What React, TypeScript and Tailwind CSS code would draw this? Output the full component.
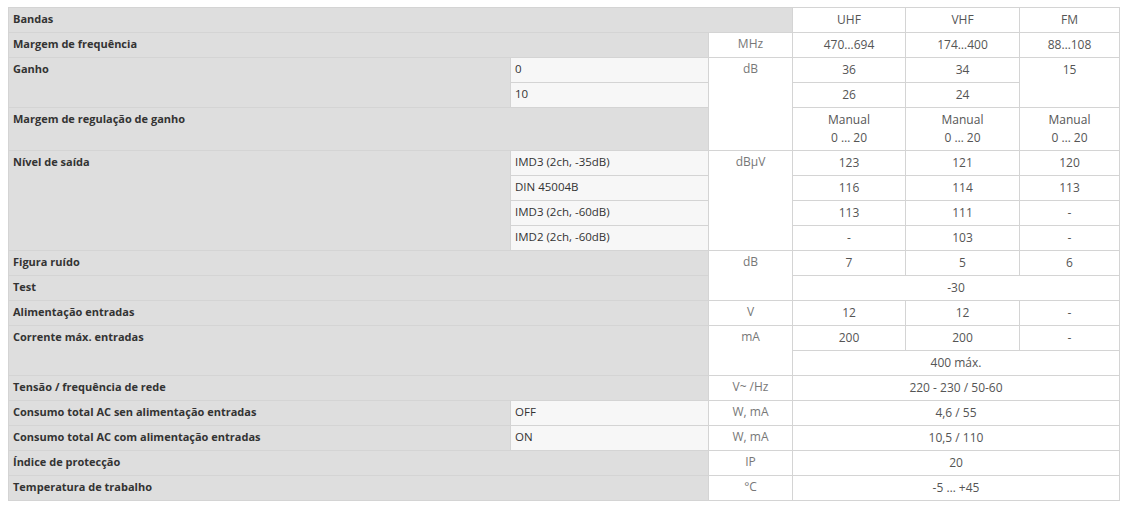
import React from "react";

type Cell = {
  t: React.ReactNode;
  k: "label" | "sub" | "unit" | "val";
  cls?: string;
};

const L = (t: React.ReactNode, cls = ""): Cell => ({ t, k: "label", cls });
const S = (t: React.ReactNode, cls = ""): Cell => ({ t, k: "sub", cls });
const U = (t: React.ReactNode, cls = ""): Cell => ({ t, k: "unit", cls });
const V = (t: React.ReactNode, cls = ""): Cell => ({ t, k: "val", cls });

const manual = (
  <>
    Manual
    <br />0 … 20
  </>
);

const cells: Cell[] = [
  L("Bandas", "col-span-3"),
  V("UHF"),
  V("VHF"),
  V("FM"),
  L("Margem de frequência", "col-span-2"),
  U("MHz"),
  V("470…694"),
  V("174…400"),
  V("88…108"),
  L("Ganho", "row-span-2"),
  S("0"),
  U("dB", "row-span-3"),
  V("36"),
  V("34"),
  V("15", "row-span-2"),
  S("10"),
  V("26"),
  V("24"),
  L("Margem de regulação de ganho", "col-span-2"),
  V(manual),
  V(manual),
  V(manual),
  L("Nível de saída", "row-span-4"),
  S("IMD3 (2ch, -35dB)"),
  U("dBµV", "row-span-4"),
  V("123"),
  V("121"),
  V("120"),
  S("DIN 45004B"),
  V("116"),
  V("114"),
  V("113"),
  S("IMD3 (2ch, -60dB)"),
  V("113"),
  V("111"),
  V("-"),
  S("IMD2 (2ch, -60dB)"),
  V("-"),
  V("103"),
  V("-"),
  L("Figura ruído", "col-span-2"),
  U("dB", "row-span-2"),
  V("7"),
  V("5"),
  V("6"),
  L("Test", "col-span-2"),
  V("-30", "col-span-3"),
  L("Alimentação entradas", "col-span-2"),
  U("V"),
  V("12"),
  V("12"),
  V("-"),
  L("Corrente máx. entradas", "col-span-2 row-span-2"),
  U("mA", "row-span-2"),
  V("200"),
  V("200"),
  V("-"),
  V("400 máx.", "col-span-3"),
  L("Tensão / frequência de rede", "col-span-2"),
  U("V~ /Hz"),
  V("220 - 230 / 50-60", "col-span-3"),
  L("Consumo total AC sen alimentação entradas"),
  S("OFF"),
  U("W, mA"),
  V("4,6 / 55", "col-span-3"),
  L("Consumo total AC com alimentação entradas"),
  S("ON"),
  U("W, mA"),
  V("10,5 / 110", "col-span-3"),
  L("Índice de protecção", "col-span-2"),
  U("IP"),
  V("20", "col-span-3"),
  L("Temperatura de trabalho", "col-span-2"),
  U("°C"),
  V("-5 … +45", "col-span-3"),
];

const base: Record<Cell["k"], string> = {
  label:
    "bg-[#dedede] text-[#333333] font-bold text-[11px] leading-[17px] pl-[4px] pt-[2px]",
  sub: "bg-[#f7f7f7] text-[#333333] text-[11.5px] leading-[17px] pl-[4px] pt-[2px]",
  unit: "bg-white text-[#777777] text-[12px] leading-[18px] text-center pt-[2px]",
  val: "bg-white text-[#555555] text-[12px] leading-[18px] text-center pt-[3px]",
};

export default function App() {
  return (
    <div className="w-[1127px] h-[510px] bg-white font-['Open_Sans',sans-serif] pt-[7px] pl-[8px]">
      <div className="grid w-max grid-cols-[501px_197px_83px_112px_113px_99px] grid-rows-[24px_24px_24px_24px_42px_repeat(14,24px)] gap-px bg-[#d4d4d4] p-px">
        {cells.map((c, i) => (
          <div key={i} className={`${base[c.k]} ${c.cls ?? ""}`}>
            {c.t}
          </div>
        ))}
      </div>
    </div>
  );
}
